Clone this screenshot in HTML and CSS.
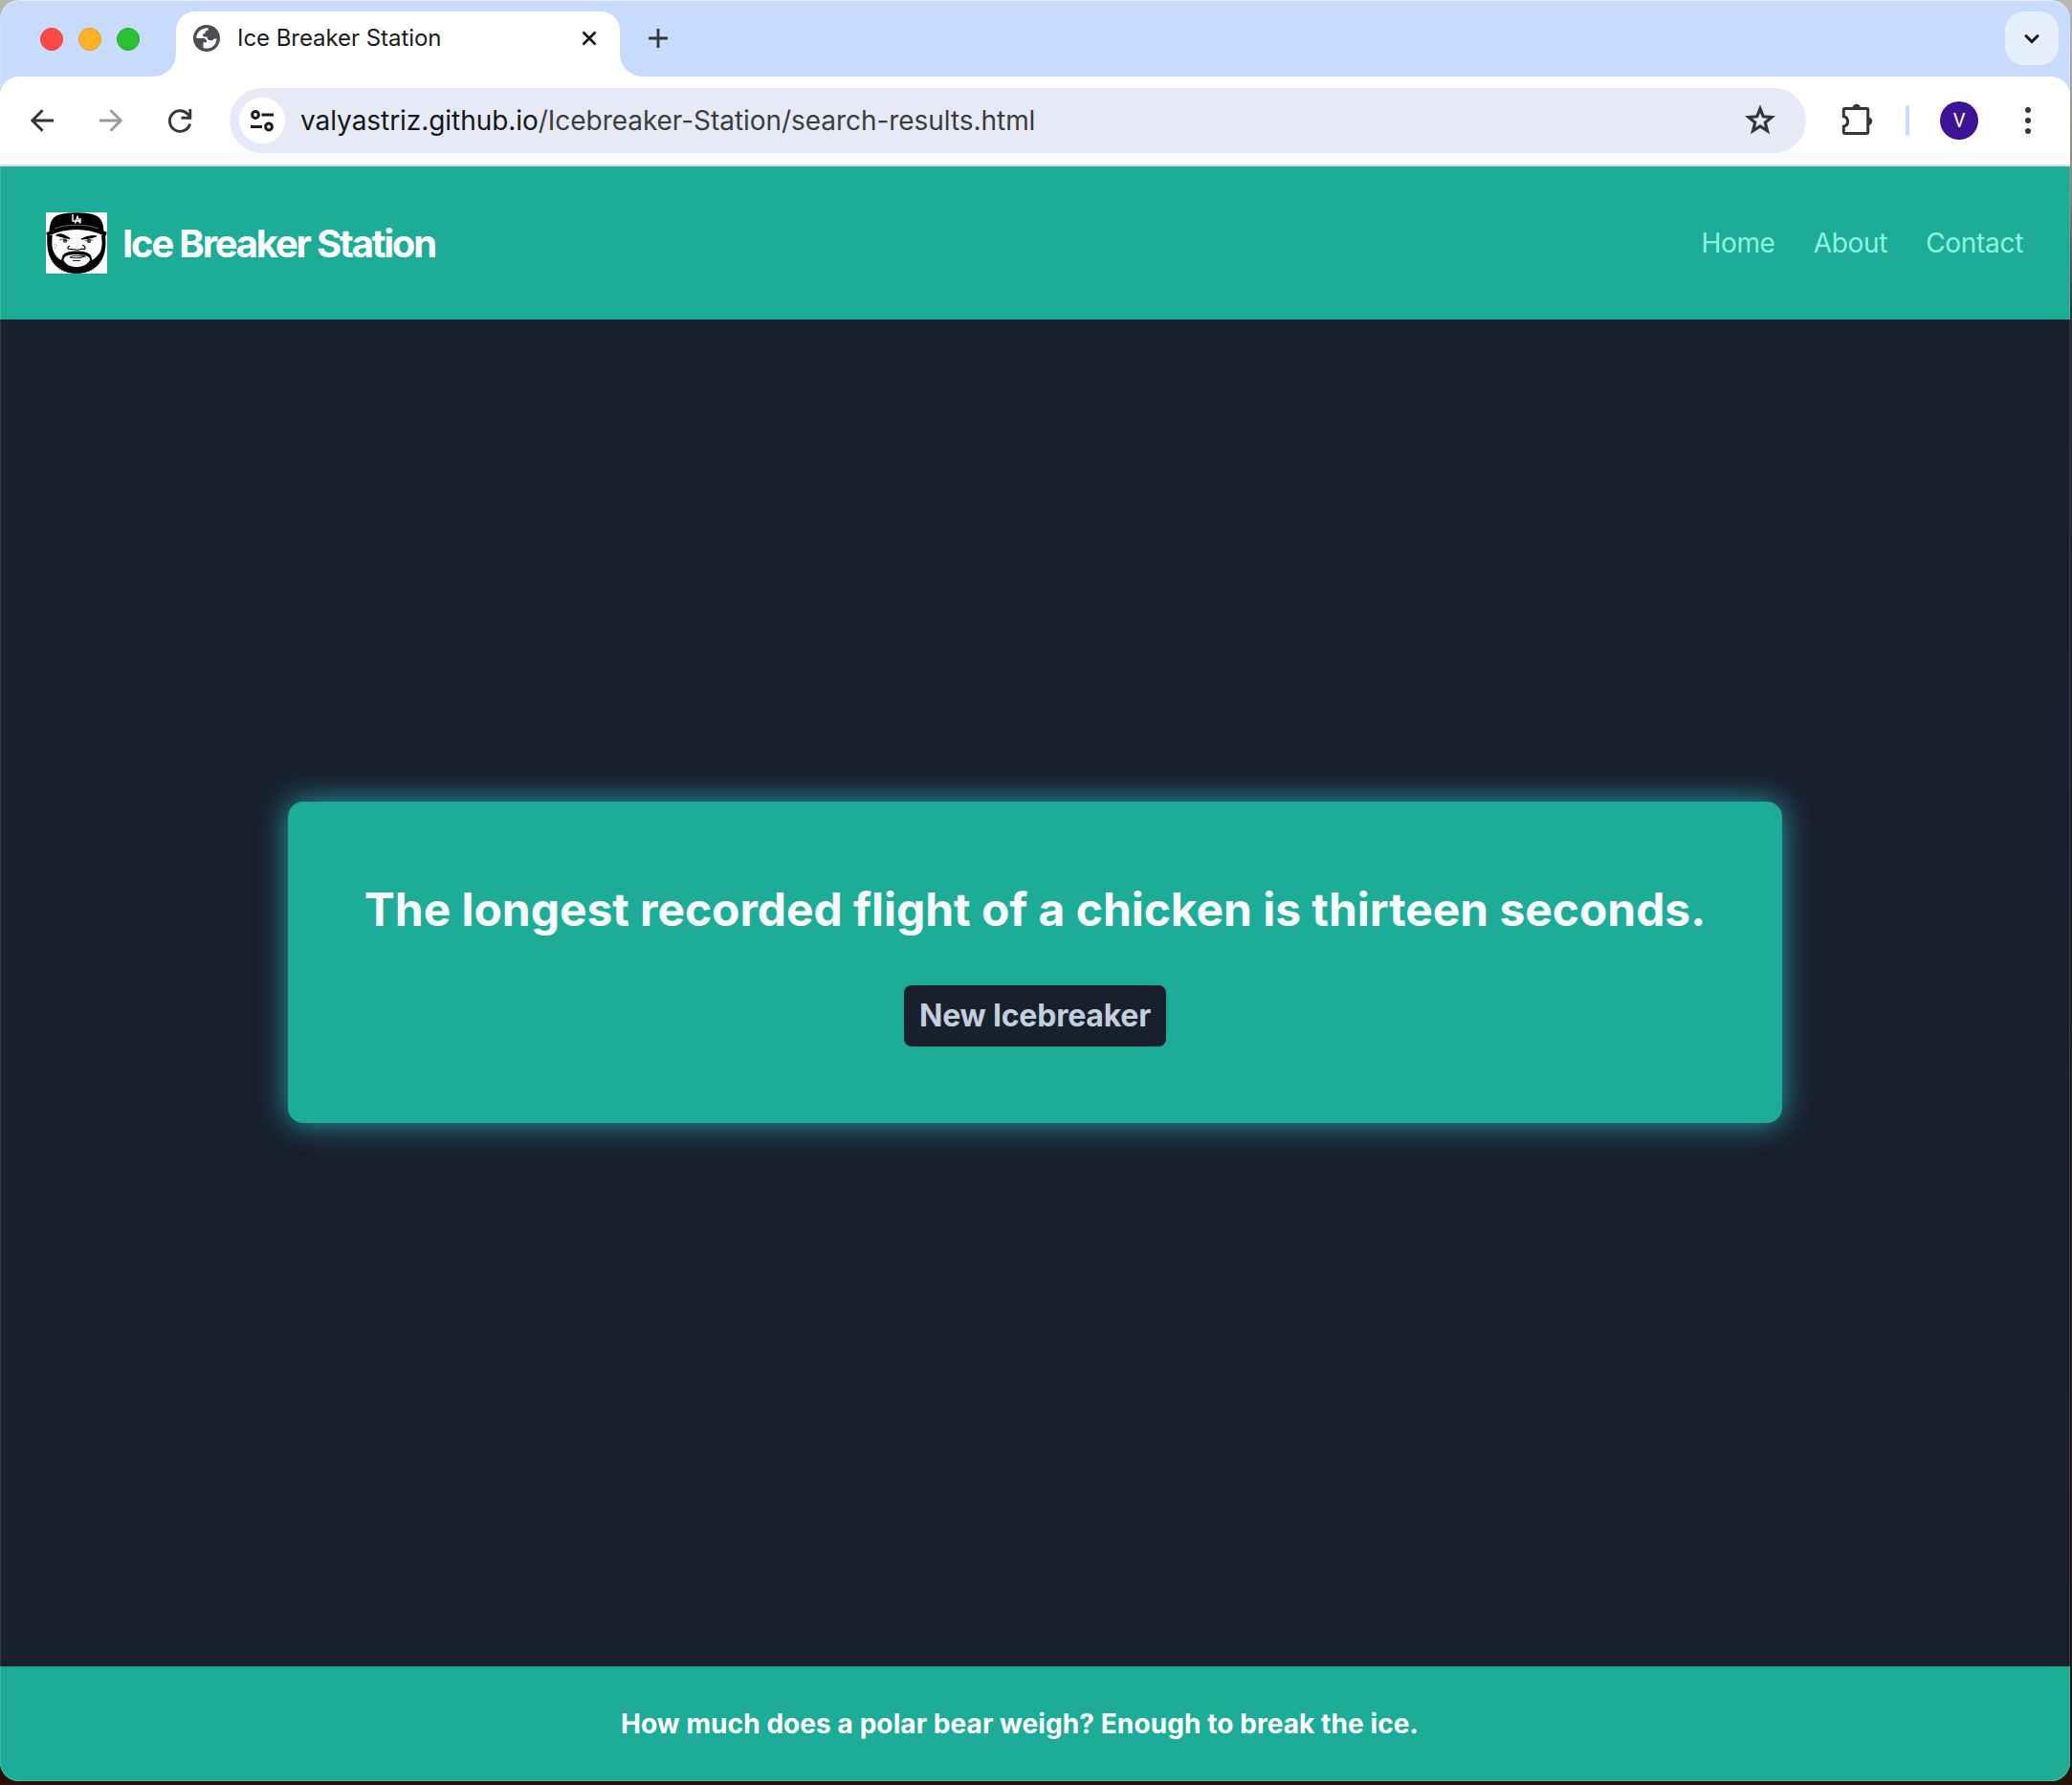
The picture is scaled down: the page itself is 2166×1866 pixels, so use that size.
FILE: index.html
```html
<!DOCTYPE html>
<html lang="en">
<head>
<meta charset="utf-8">
<title>Ice Breaker Station</title>
<link rel="stylesheet" href="styles.css">
</head>
<body>
<div class="window">
  <div class="tabstrip">
    <div class="lights"><i class="light red"></i><i class="light amber"></i><i class="light green"></i></div>
    <div class="tab">
      <svg class="favicon" viewBox="0 0 28 28"><circle cx="14" cy="14" r="14" fill="#4b4f54"/><path d="M15.500 3.200C8.500 2.600 3.200 8 3.200 14h7.200c2.600 0 3.800 1.500 3.800 4.200h-3.700v5.800c1.200.4 2.300.6 3.500.6 5.800 0 10.400-4.600 10.600-10.200h-2.800c-.7 1.300-1.900 1.800-3.600 1.800-2.500 0-3.700-1.300-3.700-3.700h-4.300V9.200h2.200c0-2.500 1-3.700 3.400-3.700z" fill="#fff"/></svg>
      <span class="tab-title">Ice Breaker Station</span>
      <svg class="tab-close" viewBox="0 0 16 16"><path d="M1.500 1.500l13 13M14.500 1.500l-13 13" stroke="#1b1b1b" stroke-width="2.800"/></svg>
    </div>
    <svg class="newtab" viewBox="0 0 20 20"><path d="M10 0v20M0 10h20" stroke="#333536" stroke-width="2.800"/></svg>
    <div class="tabsearch"><svg width="16" height="11" viewBox="0 0 17 11"><path d="M1.200 1.500l7.300 7.200 7.300-7.200" fill="none" stroke="#1b1b1b" stroke-width="3.200"/></svg></div>
  </div>
  <div class="toolbar">
    <svg class="back" viewBox="0 0 24 24"><path d="M24 12H2M12.500 1.200L1.700 12l10.800 10.800" fill="none" stroke="#333536" stroke-width="2.900"/></svg>
    <svg class="forward" viewBox="0 0 24 24"><path d="M0 12h22M11.500 1.200L22.300 12 11.500 22.800" fill="none" stroke="#9a9b9c" stroke-width="2.900"/></svg>
    <svg class="reload" viewBox="0 0 26 26"><path d="M23.600 16.500A10.800 10.800 0 1 1 21 6l2.500 2.900" fill="none" stroke="#333536" stroke-width="2.900"/><path d="M23.800 1v9.200h-9.300" fill="none" stroke="#333536" stroke-width="2.900"/></svg>
    <div class="omnibox">
      <div class="siteinfo"><svg width="26" height="24" viewBox="0 0 26 24" fill="none" stroke="#1b1b1b" stroke-width="3"><circle cx="6" cy="6" r="3.400"/><path d="M12.500 6H25M1 18.500h12"/><circle cx="20" cy="18.500" r="3.400"/></svg></div>
      <span class="url"><b>valyastriz.github.io</b>/Icebreaker-Station/search-results.html</span>
      <svg class="star" viewBox="0 0 32 32"><path d="M16 3.600l3.250 8.200 8.900.65-6.850 5.600 2.200 8.700L16 22l-7.500 4.750 2.200-8.700-6.850-5.600 8.900-.65z" fill="none" stroke="#333536" stroke-width="3.200"/></svg>
    </div>
    <svg class="puzzle" viewBox="0 0 34 34"><path d="M4.500 5.500h22a1.200 1.200 0 0 1 1.200 1.200v23.600a1.200 1.200 0 0 1-1.200 1.200H3.500a1.200 1.200 0 0 1-1.200-1.200V24.100a5.300 5.300 0 0 0 0-10.400V6.700a1.200 1.200 0 0 1 1.200-1.200z" fill="none" stroke="#333536" stroke-width="3"/><path d="M11.500 5a4.200 4.200 0 0 1 8.400 0zM28 14.500a4.200 4.200 0 0 1 0 8.400z" fill="#333536"/></svg>
    <i class="divider"></i>
    <div class="avatar">V</div>
    <svg class="menu" viewBox="0 0 6 28" fill="#333536"><circle cx="3" cy="3" r="3"/><circle cx="3" cy="14" r="3"/><circle cx="3" cy="25" r="3"/></svg>
  </div>
  <header class="site-header">
    <svg class="logo" viewBox="0 0 64 64">
      <rect width="64" height="64" fill="#fff"/>
      <path d="M1.500 24C0 42 5 53 15 59.500c10 6 24 6 34 0C59 53 64 42 62 24z"/>
      <path d="M7.500 20C6 29 5.500 36 8.500 42c2 4 4 6 7.500 8l1.500-5c3-3.500 8-4.500 14.500-4.500s12 1 15 4.500l1.500 5c4-3 6-5 8-8 3-6 2.500-14 .5-22-13-4-36-4-49.500 0z" fill="#fff"/>
      <path d="M18.500 50c0-4 4-6 13.500-6s14 2 14 6c-3 5-8 7-14 7s-11-2-13.500-7z" fill="#fff"/>
      <path d="M3.500 20C4 10 7 4.500 13 2.700 25-.5 39-.5 51 2.700 57 5 60 10 60.500 19.500l3 1-.5 4-3-.5C43 16 21 16 4 24l-3 .5L.5 21z"/>
      <path d="M9 17C22 12 42 12 55 17" fill="none" stroke="#888" stroke-width=".8"/>
      <path d="M28 2v7h4M30.500 11.500L33 4.500l2.700 7M31.500 9h3.500M36 6v5" fill="none" stroke="#fff" stroke-width="1.400"/>
      <path d="M11 24c3-2 8-1 14 3.500-4-1-9-1.500-14-3.500zM53 25c-6-1-11 .5-16 3 5 0 10-1 16-3z" stroke="#000" stroke-width="1.200"/>
      <path d="M14 29q4-2 9 1M41 30q4-2 8-1" fill="none" stroke="#777" stroke-width="1.300"/>
      <circle cx="20" cy="29.500" r="2.200" fill="#444"/><circle cx="45" cy="30" r="2.200" fill="#444"/>
      <path d="M25 35q-4 2-1 3.500 3-.5 4 .5M38 34q5 2.500 2 4.500-3-1-4 .5M28.500 38.500q3.500 1.500 8 0" fill="none" stroke="#000" stroke-width="1.200"/>
      <path d="M25 47q4-2.500 8-1.500 4-1 8 .5-8 3-16 1M28 50.500h8" fill="none" stroke="#222" stroke-width="1.100"/>
      <path d="M9 33l3 2M9 37l2-1" stroke="#aaa"/>
    </svg>
    <span class="brand">Ice Breaker Station</span>
    <nav class="nav"><a class="home">Home</a><a class="about">About</a><a class="contact">Contact</a></nav>
  </header>
  <main class="content">
    <section class="card">
      <h1 class="fact">The longest recorded flight of a chicken is thirteen seconds.</h1>
      <button class="button">New Icebreaker</button>
    </section>
  </main>
  <footer class="footer"><span class="joke">How much does a polar bear weigh? Enough to break the ice.</span></footer>
</div>
</body>
</html>
```
FILE: styles.css
```css
* { box-sizing: border-box; }
body {
  margin: 0;
  width: 2166px;
  height: 1866px;
  overflow: hidden;
  font-family: Inter, "Liberation Sans", sans-serif;
  background: linear-gradient(#b9b7b0 0, #8b8178 200px, #2c2b30 340px, #22201f 1000px, #261208 1866px);
}
svg { display: block; flex: none; }
.window {
  width: 2164px;
  height: 1862px;
  display: flex;
  flex-direction: column;
  border-radius: 20px;
  overflow: hidden;
  background: #c9dbfd;
  position: relative;
}
.window::after {
  content: "";
  position: absolute;
  inset: 0;
  border-radius: 20px;
  box-shadow: inset 0 0 0 1px rgba(255, 255, 255, .12), inset 0 1px 0 rgba(255, 255, 255, .5);
}
.tabstrip {
  height: 80px;
  flex: none;
  display: flex;
  align-items: flex-start;
  padding: 12px 12px 0 42px;
}
.lights { display: flex; gap: 16px; width: 142px; padding-top: 17px; }
.light { width: 24px; height: 24px; border-radius: 50%; }
.red { background: #fe4845; border: 1px solid #e4403d; }
.amber { background: #fdb127; border: 1px solid #de9c24; }
.green { background: #2ac132; border: 1px solid #25a82c; }
.tab {
  position: relative;
  width: 464px;
  height: 68px;
  padding: 0 24px 22px 18px;
  display: flex;
  align-items: center;
  background: #fff;
  border-radius: 20px 20px 0 0;
}
.tab::before, .tab::after {
  content: "";
  position: absolute;
  bottom: 0;
  width: 24px;
  height: 24px;
}
.tab::before { left: -24px; background: radial-gradient(circle at 0 0, transparent 23.500px, #fff 24.500px); }
.tab::after { right: -24px; background: radial-gradient(circle at 100% 0, transparent 23.500px, #fff 24.500px); }
.favicon { width: 28px; height: 28px; margin-top: 10px; }
.tab-title { margin: 10px auto 0 18px; font-size: 24px; line-height: 30px; letter-spacing: -.05px; color: #1b1b1b; white-space: nowrap; }
.tab-close { width: 16px; height: 16px; margin-top: 10px; }
.newtab { width: 20px; height: 20px; margin: 18px 0 0 30px; }
.tabsearch {
  width: 56px;
  height: 56px;
  margin-left: auto;
  border-radius: 20px;
  background: #e5effe;
  display: flex;
  align-items: center;
  justify-content: center;
}
.toolbar {
  height: 94px;
  flex: none;
  display: flex;
  align-items: center;
  padding: 0 41px 0 32px;
  background: #fff;
  border-bottom: 2px solid #dbdedb;
  border-radius: 20px 20px 0 0;
}
.back, .forward { width: 24px; height: 24px; }
.forward { margin-left: 48px; }
.reload { width: 26px; height: 26px; margin-left: 47px; }
.omnibox {
  width: 1648px;
  height: 68px;
  margin-left: 39px;
  padding: 0 32px 0 10px;
  border-radius: 34px;
  background: #e7eaf6;
  display: flex;
  align-items: center;
}
.siteinfo {
  width: 48px;
  height: 48px;
  border-radius: 50%;
  background: #fff;
  display: flex;
  align-items: center;
  justify-content: center;
}
.url { margin-left: 16px; font-size: 28px; letter-spacing: -.05px; color: #3b3d3c; white-space: nowrap; }
.url b { font-weight: 400; color: #161716; }
.star { width: 32px; height: 32px; margin-left: auto; }
.puzzle { width: 34px; height: 34px; margin: -2px 0 0 37px; }
.divider { width: 4px; height: 32px; margin-left: 33px; border-radius: 2px; background: #c9dbfd; }
.avatar {
  width: 40px;
  height: 40px;
  margin-left: 32px;
  border-radius: 50%;
  background: #3f1396;
  color: #fff;
  font: 20px/40px Roboto, sans-serif;
  text-align: center;
}
.menu { width: 6px; height: 28px; margin-left: 49px; }
.site-header {
  height: 160px;
  flex: none;
  display: flex;
  align-items: center;
  padding: 0 49px 0 48px;
  background: #1dac97;
}
.logo { width: 64px; height: 64px; }
.brand { margin-left: 16px; font-size: 40px; font-weight: 700; letter-spacing: -2.180px; color: #fff; white-space: nowrap; }
.nav { display: flex; gap: 40px; margin-left: auto; font-size: 28px; letter-spacing: -.3px; color: #8bf8dc; }
.content { flex: 1; display: flex; align-items: center; justify-content: center; padding-bottom: 64px; background: #181f2d; }
.card {
  width: 1562px;
  height: 336px;
  display: flex;
  flex-direction: column;
  align-items: center;
  border-radius: 16px;
  background: #1dac97;
  padding-top: 81px;
  box-shadow: 0 0 32px #2ca1ad;
}
.fact { margin: 0; font-size: 48px; line-height: 64px; font-weight: 700; letter-spacing: -.06px; color: #f8fafc; white-space: nowrap; }
.button {
  width: 274px;
  height: 64px;
  margin-top: 47px;
  padding: 0;
  border: 0;
  border-radius: 8px;
  background: #181f2d;
  color: #c4cfdd;
  font: 700 32px/64px Inter, sans-serif;
  letter-spacing: -.22px;
  white-space: nowrap;
}
.footer { height: 120px; flex: none; display: flex; align-items: center; padding-left: 649px; background: #1dac97; }
.joke { font-size: 28px; line-height: 40px; font-weight: 700; letter-spacing: .08px; color: #fff; white-space: nowrap; }
```
